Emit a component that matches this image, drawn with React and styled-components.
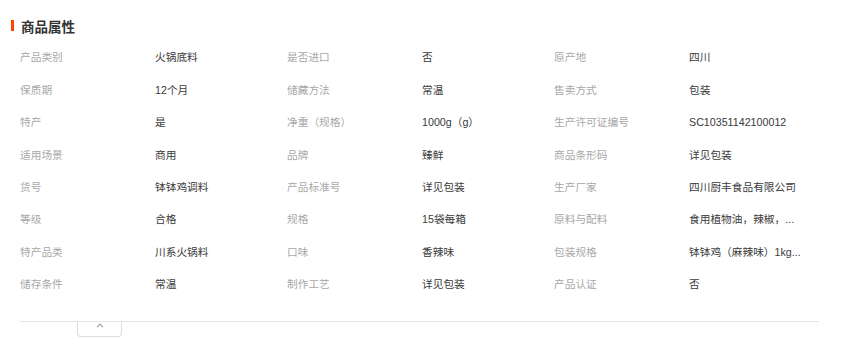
import React from 'react';
import styled, { createGlobalStyle } from 'styled-components';

const GlobalStyle = createGlobalStyle`
  body {
    margin: 0;
    background: #fff;
    font-family: "Liberation Sans", "Noto Sans CJK SC", sans-serif;
  }
`;

const attrs = [
  ['产品类别', '火锅底料', '是否进口', '否', '原产地', '四川'],
  ['保质期', '12个月', '储藏方法', '常温', '售卖方式', '包装'],
  ['特产', '是', '净重（规格）', '1000g（g）', '生产许可证编号', 'SC10351142100012'],
  ['适用场景', '商用', '品牌', '臻鲜', '商品条形码', '详见包装'],
  ['货号', '钵钵鸡调料', '产品标准号', '详见包装', '生产厂家', '四川厨丰食品有限公司'],
  ['等级', '合格', '规格', '15袋每箱', '原料与配料', '食用植物油，辣椒，...'],
  ['特产品类', '川系火锅料', '口味', '香辣味', '包装规格', '钵钵鸡（麻辣味）1kg...'],
  ['储存条件', '常温', '制作工艺', '详见包装', '产品认证', '否'],
];

const ProductAttrs = () => {
  return (
    <Section>
      <Title>商品属性</Title>
      <AttrGrid>
        {attrs.map((row, i) =>
          row.map((text, j) => (
            <Cell key={`${i}-${j}`} $label={j % 2 === 0}>
              {text}
            </Cell>
          ))
        )}
      </AttrGrid>
      <Footer>
        <ToggleButton aria-label="收起">
          <svg width="8" height="5" viewBox="0 0 8 5">
            <path d="M1 4.2 L4 1.2 L7 4.2" fill="none" stroke="#9aa3ad" strokeWidth="1.2" />
          </svg>
        </ToggleButton>
      </Footer>
    </Section>
  );
};

export default function App() {
  return (
    <>
      <GlobalStyle />
      <ProductAttrs />
    </>
  );
}

const Section = styled.section`
  width: 845px;
  height: 346px;
  box-sizing: border-box;
  padding: 18px 26px 0 20px;
`;

const Title = styled.h2`
  position: relative;
  margin: 0 0 0 1px;
  height: 16px;
  line-height: 16px;
  font-size: 13.5px;
  font-weight: bold;
  color: #333;
  font-family: "Noto Sans CJK SC", sans-serif;

  &::before {
    content: '';
    position: absolute;
    left: -10px;
    top: 2px;
    width: 3px;
    height: 11px;
    background: #ff4400;
  }
`;

const AttrGrid = styled.div`
  display: grid;
  grid-template-columns: repeat(3, 135px 132px);
  grid-auto-rows: 32.4px;
  margin-top: 6.8px;
`;

const Cell = styled.div`
  display: flex;
  align-items: center;
  font-size: 10.7px;
  font-family: "Liberation Sans", "Noto Sans CJK SC", sans-serif;
  color: ${p => (p.$label ? '#a8a8a8' : '#3a3a3a')};
  white-space: nowrap;
  overflow: hidden;
`;

const Footer = styled.div`
  box-sizing: border-box;
  margin-top: 21px;
  width: 799px;
  border-top: 1px solid #e5e5e5;
  padding-left: 57px;
`;

const ToggleButton = styled.button`
  display: flex;
  align-items: flex-start;
  justify-content: center;
  width: 45px;
  height: 16px;
  padding: 1px 0 0;
  margin-top: -1px;
  background: #fff;
  border: 1px solid #ddd;
  border-top: 1px solid #e5e5e5;
  border-radius: 0 0 4px 4px;
  cursor: pointer;
`;
